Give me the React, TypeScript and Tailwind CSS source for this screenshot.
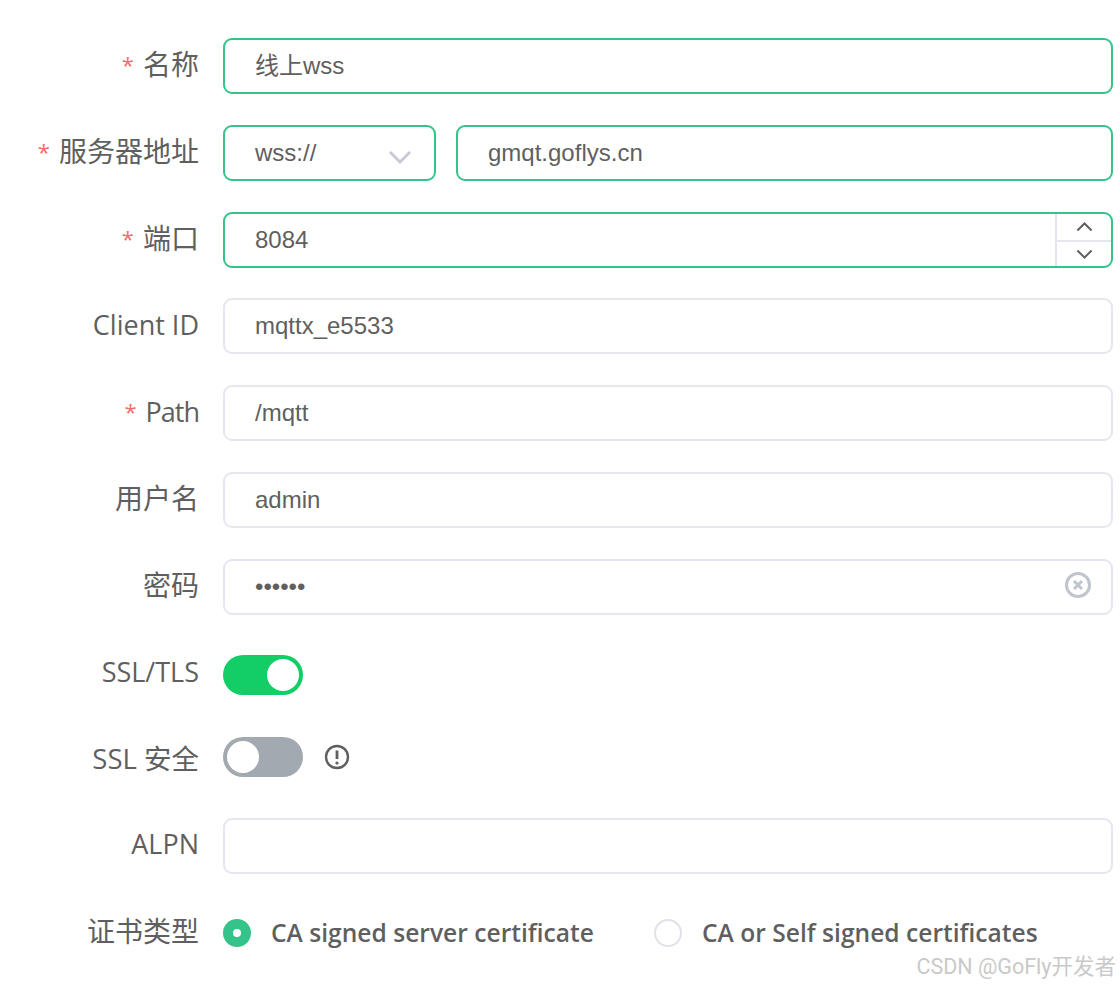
const labelFont = "font-['Open_Sans','Noto_Sans_CJK_SC',sans-serif]";
const inputFont = "font-['Liberation_Sans','Noto_Sans_CJK_SC',sans-serif]";

function Label({
  text,
  required,
  size = "text-[28px]",
  className = "pb-[4px]",
}: {
  text: string;
  required?: boolean;
  size?: string;
  className?: string;
}) {
  return (
    <div className={`w-[199px] shrink-0 flex justify-end items-center text-[#5f5f5f] ${labelFont} ${size} ${className}`}>
      {required && <span className="mr-[9px] text-[#f56c6c] text-[22px] tracking-normal leading-none">*</span>}
      <span className="leading-none">{text}</span>
    </div>
  );
}

function Field({
  value,
  active,
  className = "flex-1",
  children,
}: {
  value: string;
  active?: boolean;
  className?: string;
  children?: React.ReactNode;
}) {
  return (
    <div
      className={`${className} relative h-[56px] rounded-[9px] border-2 flex items-center pl-[30px] text-[24px] text-[#5f5f5f] ${inputFont} ${
        active ? "border-[#34c388]" : "border-[#e6e6f0]"
      }`}
    >
      <span className="leading-none">{value}</span>
      {children}
    </div>
  );
}

function Row({
  label,
  required,
  size,
  labelClass,
  className = "h-[56px] mb-[30.8px]",
  children,
}: {
  label: string;
  required?: boolean;
  size?: string;
  labelClass?: string;
  className?: string;
  children: React.ReactNode;
}) {
  return (
    <div className={`flex items-center ${className}`}>
      <Label text={label} required={required} size={size} className={labelClass} />
      <div className="ml-[24px] w-[890px] flex items-center">{children}</div>
    </div>
  );
}

function Switch({ on }: { on?: boolean }) {
  return (
    <div className={`w-[80px] h-[40px] rounded-full p-[4px] flex ${on ? "bg-[#13ce66] justify-end" : "bg-[#a2a9b1] justify-start"}`}>
      <div className="w-[32px] h-[32px] rounded-full bg-white" />
    </div>
  );
}

function Caret({ up, className }: { up?: boolean; className: string }) {
  return (
    <svg viewBox="0 0 24 14" fill="none" stroke="currentColor" className={className}>
      <path d={up ? "M2 12L12 2l10 10" : "M2 2l10 10L22 2"} strokeWidth="2.8" />
    </svg>
  );
}

export default function App() {
  return (
    <div className="relative w-[1120px] h-[986px] overflow-hidden bg-white pt-[38px]">
      <Row label="名称" required>
        <Field value="线上wss" active />
      </Row>
      <Row label="服务器地址" required>
        <Field value="wss://" active className="w-[213px] shrink-0 mr-[20px]">
          <Caret className="absolute right-[22px] top-[23px] w-[24px] h-[14px] text-[#c6c9d2]" />
        </Field>
        <Field value="gmqt.goflys.cn" active />
      </Row>
      <Row label="端口" required>
        <Field value="8084" active>
          <div className="absolute right-0 top-0 bottom-0 w-[56px] border-l-2 border-[#e6e6f0] flex flex-col">
            <div className="h-[28px] flex items-center justify-center border-b-2 border-[#e6e6f0]">
              <Caret up className="w-[17px] h-[10px] text-[#5f5f5f]" />
            </div>
            <div className="flex-1 flex items-center justify-center">
              <Caret className="w-[17px] h-[10px] text-[#5f5f5f]" />
            </div>
          </div>
        </Field>
      </Row>
      <Row label="Client ID" size="text-[27px]">
        <Field value="mqttx_e5533" />
      </Row>
      <Row label="Path" required size="text-[27px] tracking-[-1px]">
        <Field value="/mqtt" />
      </Row>
      <Row label="用户名">
        <Field value="admin" />
      </Row>
      <Row label="密码" className="h-[56px] mb-[40px]">
        <Field value="••••••">
          <svg viewBox="0 0 26 26" className="absolute right-[20px] top-[11px] w-[26px] h-[26px] text-[#c0c4cc]" fill="none" stroke="currentColor">
            <circle cx="13" cy="13" r="11.5" strokeWidth="3" />
            <path d="M9 9l8 8M17 9l-8 8" strokeWidth="3" />
          </svg>
        </Field>
      </Row>
      <Row label="SSL/TLS" size="text-[27px]" labelClass="pb-[6px]" className="h-[40px] mb-[42px]">
        <Switch on />
      </Row>
      <Row label="SSL 安全" size="text-[27.5px]" labelClass="pt-[4px]" className="h-[40px] mb-[41px]">
        <Switch />
        <svg viewBox="0 0 26 26" className="ml-[21px] w-[26px] h-[26px] text-[#5f5f5f]" fill="none" stroke="currentColor">
          <circle cx="13" cy="13" r="11" strokeWidth="2.4" />
          <path d="M13 6.5v8.5" strokeWidth="2.8" />
          <circle cx="13" cy="19" r="1.6" fill="currentColor" stroke="none" />
        </svg>
      </Row>
      <Row label="ALPN" size="text-[27px]" className="h-[56px] mb-[31px]">
        <Field value="" />
      </Row>
      <Row label="证书类型">
        <div className={`flex items-center text-[24.6px] font-semibold text-[#5f5f5f] ${labelFont}`}>
          <span className="w-[28px] h-[28px] rounded-full bg-[#34c388] flex items-center justify-center">
            <span className="w-[8px] h-[8px] rounded-full bg-white" />
          </span>
          <span className="ml-[20px] pt-[2px] leading-none">CA signed server certificate</span>
          <span className="ml-[60px] w-[28px] h-[28px] rounded-full border-2 border-[#e0e2ea]" />
          <span className="ml-[20px] pt-[2px] leading-none">CA or Self signed certificates</span>
        </div>
      </Row>
      <div className="absolute right-[4px] top-[956px] text-[21.5px] leading-none text-[#c9c9c9] font-['Roboto','Noto_Sans_CJK_SC',sans-serif]">
        CSDN @GoFly开发者
      </div>
    </div>
  );
}
